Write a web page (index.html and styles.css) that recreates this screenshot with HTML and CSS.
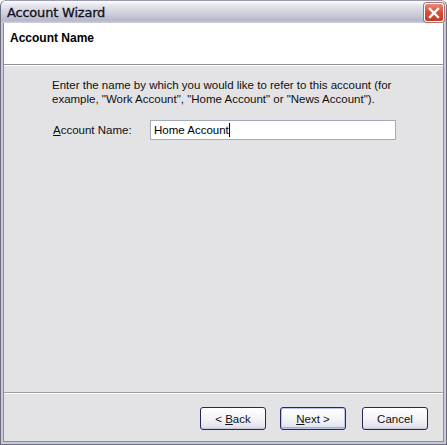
FILE: index.html
```html
<!DOCTYPE html>
<html>
<head>
<meta charset="utf-8">
<link rel="stylesheet" href="styles.css">
</head>
<body>
<div class="window">
  <div class="titlebar">
    <span class="title">Account Wizard</span>
    <span class="close"><svg width="12" height="12" viewBox="0 0 12 12"><path d="M2 2 L10 10 M10 2 L2 10" stroke="#fff" stroke-width="2.4" stroke-linecap="square"/></svg></span>
  </div>
  <div class="frame">
    <div class="header">Account Name</div>
    <div class="main">
      <p class="desc">Enter the name by which you would like to refer to this account (for example, "Work Account", "Home Account" or "News Account").</p>
      <div class="row">
        <label class="label"><u>A</u>ccount Name:</label>
        <div class="input">Home Account<span class="caret"></span></div>
      </div>
    </div>
    <div class="footer">
      <button class="btn">&lt; <u>B</u>ack</button>
      <button class="btn next"><u>N</u>ext &gt;</button>
      <button class="btn cancel">Cancel</button>
    </div>
  </div>
</div>
</body>
</html>
```
FILE: styles.css
```css
html, body {
  margin: 0;
  padding: 0;
  background: #fff;
}
.window {
  width: 447px;
  height: 445px;
  box-sizing: border-box;
  border: 1px solid #6d6d82;
  border-top-color: #9a9ab0;
  border-radius: 6px 6px 0 0;
  background: #c9c9d9;
  padding: 0 2px 2px 2px;
  display: flex;
  flex-direction: column;
  font-family: "DejaVu Sans", sans-serif;
}
.titlebar {
  height: 22px;
  flex: none;
  display: flex;
  align-items: center;
  justify-content: space-between;
  padding: 0 2px 0 6px;
  background: linear-gradient(to bottom, #ffffff 0%, #e6e6ee 20%, #c6c6d6 70%, #b7b7cb 88%, #cfcfdc 100%);
  margin: 0 -2px;
  border-radius: 5px 5px 0 0;
}
.title {
  font-size: 13px;
  color: #101020;
  letter-spacing: -0.2px;
  -webkit-text-stroke: 0.3px #101020;
}
.close {
  width: 20px;
  height: 19px;
  box-sizing: border-box;
  border: 1px solid #fff;
  border-radius: 3px;
  background: linear-gradient(to bottom, #e88a7a 0%, #d4533c 45%, #c23a28 100%);
  display: flex;
  align-items: center;
  justify-content: center;
  box-shadow: 0 0 0 1px #b07070;
  margin-top: 1px;
}
.frame {
  flex: 1;
  display: flex;
  flex-direction: column;
  border: 1px solid #8a8aa0;
  border-top: none;
  background: #e3e3e5;
}
.header {
  height: 42px;
  flex: none;
  box-sizing: border-box;
  background: #fff;
  border-bottom: 1px solid #8f8f96;
  padding: 8px 0 0 6px;
  font-family: "Liberation Sans", sans-serif;
  font-weight: bold;
  font-size: 12px;
  color: #000;
}
.main {
  flex: 1;
  border-top: 1px solid #ffffff;
  padding: 12px 0 0 48px;
}
.desc {
  margin: 0;
  width: 345px;
  font-family: "Liberation Sans", sans-serif;
  font-size: 11.5px;
  line-height: 14px;
  color: #101010;
}
.row {
  display: flex;
  align-items: center;
  margin-top: 14px;
}
.label {
  width: 97px;
  padding-left: 1px;
  font-family: "Liberation Sans", sans-serif;
  font-size: 11.5px;
  color: #101010;
}
.input {
  width: 246px;
  height: 20px;
  box-sizing: border-box;
  border: 1px solid #a5acb5;
  background: #fff;
  font-family: "Liberation Sans", sans-serif;
  font-size: 11.5px;
  color: #000;
  padding: 3px 0 0 3px;
  display: flex;
  align-items: flex-start;
}
.caret {
  display: inline-block;
  width: 1px;
  height: 14px;
  background: #000;
  margin-top: -1px;
}
.footer {
  height: 49px;
  flex: none;
  box-sizing: border-box;
  border-top: 1px solid #a0a0a4;
  box-shadow: inset 0 1px 0 #fff;
  display: flex;
  align-items: flex-start;
  justify-content: flex-end;
  gap: 14px;
  padding: 14px 15px 0 0;
}
.btn {
  width: 66px;
  height: 23px;
  margin: 0;
  box-sizing: border-box;
  border: 1px solid #28285c;
  border-radius: 3px;
  background: linear-gradient(to bottom, #ffffff 0%, #f4f4f8 50%, #e6e6f0 85%, #d6d6e4 100%);
  box-shadow: inset 0 -1px 0 #c8c8dc;
  font-family: "Liberation Sans", sans-serif;
  font-size: 11.5px;
  color: #101010;
  padding: 0;
}
.next {
  box-shadow: inset 0 0 0 1px #b8c4ee, inset 0 -2px 0 #9fb0e6;
}
.cancel {
  margin-left: 2px;
}
```
